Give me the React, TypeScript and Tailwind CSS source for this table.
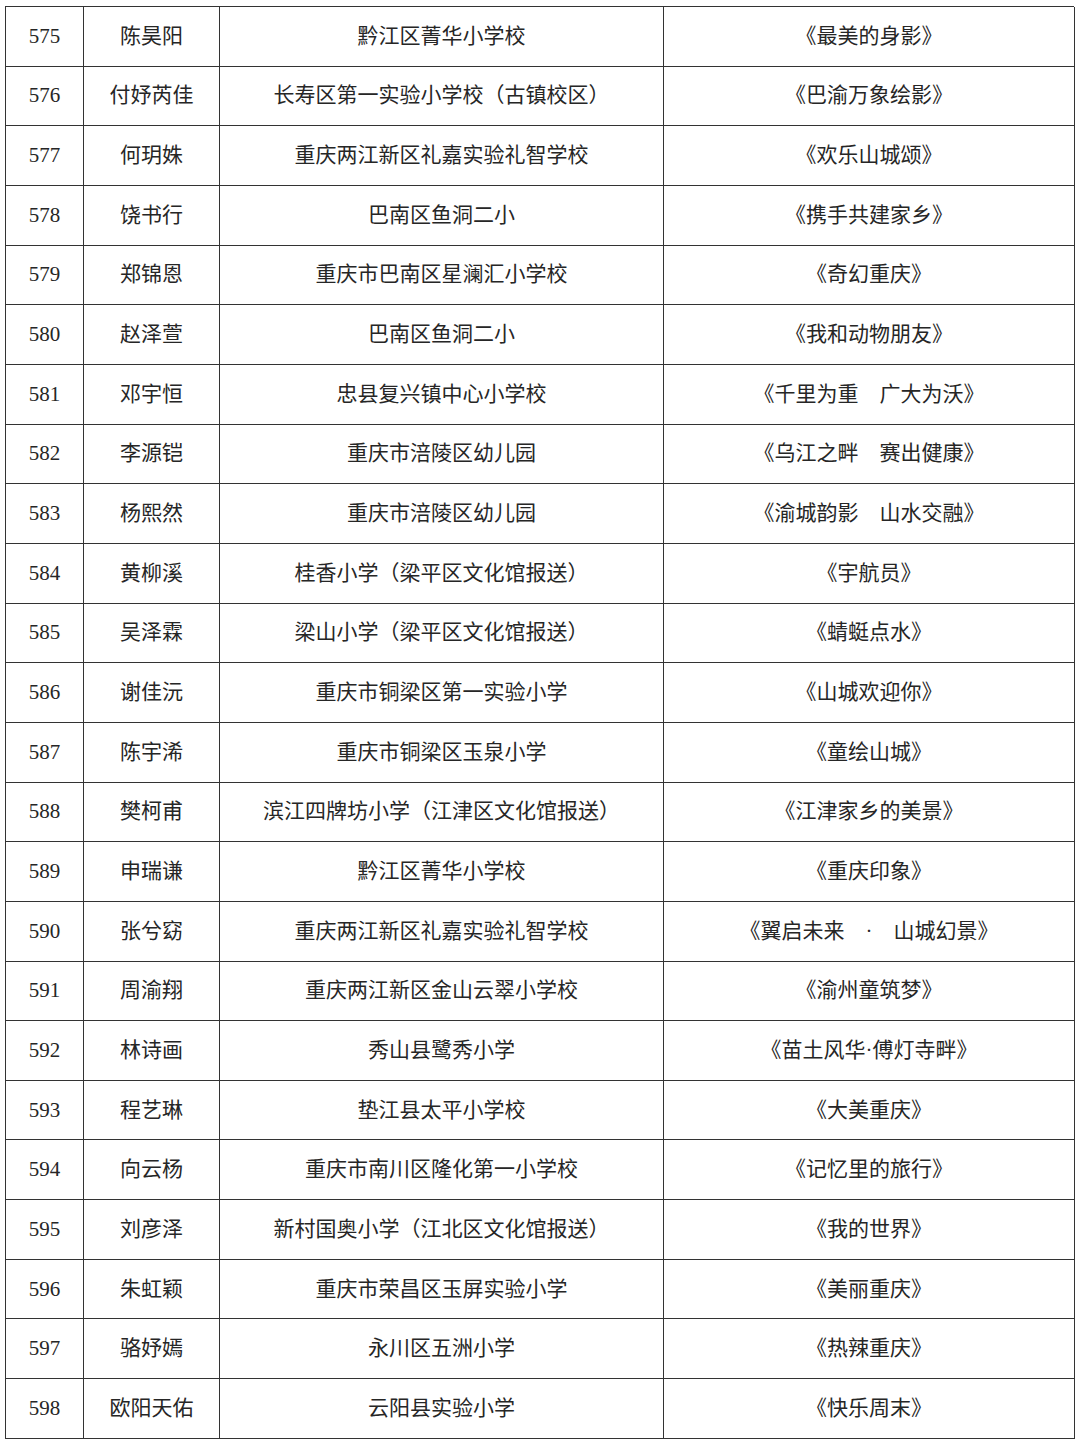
import React from 'react';

const rows: [string, string, string, string][] = [
	['575', '陈昊阳', '黔江区菁华小学校', '《最美的身影》'],
	['576', '付妤芮佳', '长寿区第一实验小学校（古镇校区）', '《巴渝万象绘影》'],
	['577', '何玥姝', '重庆两江新区礼嘉实验礼智学校', '《欢乐山城颂》'],
	['578', '饶书行', '巴南区鱼洞二小', '《携手共建家乡》'],
	['579', '郑锦恩', '重庆市巴南区星澜汇小学校', '《奇幻重庆》'],
	['580', '赵泽萱', '巴南区鱼洞二小', '《我和动物朋友》'],
	['581', '邓宇恒', '忠县复兴镇中心小学校', '《千里为重　广大为沃》'],
	['582', '李源铠', '重庆市涪陵区幼儿园', '《乌江之畔　赛出健康》'],
	['583', '杨熙然', '重庆市涪陵区幼儿园', '《渝城韵影　山水交融》'],
	['584', '黄柳溪', '桂香小学（梁平区文化馆报送）', '《宇航员》'],
	['585', '吴泽霖', '梁山小学（梁平区文化馆报送）', '《蜻蜓点水》'],
	['586', '谢佳沅', '重庆市铜梁区第一实验小学', '《山城欢迎你》'],
	['587', '陈宇浠', '重庆市铜梁区玉泉小学', '《童绘山城》'],
	['588', '樊柯甫', '滨江四牌坊小学（江津区文化馆报送）', '《江津家乡的美景》'],
	['589', '申瑞谦', '黔江区菁华小学校', '《重庆印象》'],
	['590', '张兮窈', '重庆两江新区礼嘉实验礼智学校', '《翼启未来　·　山城幻景》'],
	['591', '周渝翔', '重庆两江新区金山云翠小学校', '《渝州童筑梦》'],
	['592', '林诗画', '秀山县鹭秀小学', '《苗土风华·傅灯寺畔》'],
	['593', '程艺琳', '垫江县太平小学校', '《大美重庆》'],
	['594', '向云杨', '重庆市南川区隆化第一小学校', '《记忆里的旅行》'],
	['595', '刘彦泽', '新村国奥小学（江北区文化馆报送）', '《我的世界》'],
	['596', '朱虹颖', '重庆市荣昌区玉屏实验小学', '《美丽重庆》'],
	['597', '骆妤嫣', '永川区五洲小学', '《热辣重庆》'],
	['598', '欧阳天佑', '云阳县实验小学', '《快乐周末》'],
];

export default function App() {
	return (
		<div className="min-h-[1447px] bg-white pt-[6px] pl-[5px] font-['Liberation_Serif','Noto_Sans_CJK_SC',serif] text-[21px] text-[#262626]">
			<div className="w-[1069px] border-t border-l border-[#333]">
				{rows.map((row, i) => (
					<div key={i} className="grid h-[59.67px] grid-cols-[78px_136px_444px_411px]">
						{row.map((cell, j) => (
							<div
								key={j}
								className="flex items-center justify-center border-r border-b border-[#333] leading-none whitespace-pre"
							>
								{cell}
							</div>
						))}
					</div>
				))}
			</div>
		</div>
	);
}
